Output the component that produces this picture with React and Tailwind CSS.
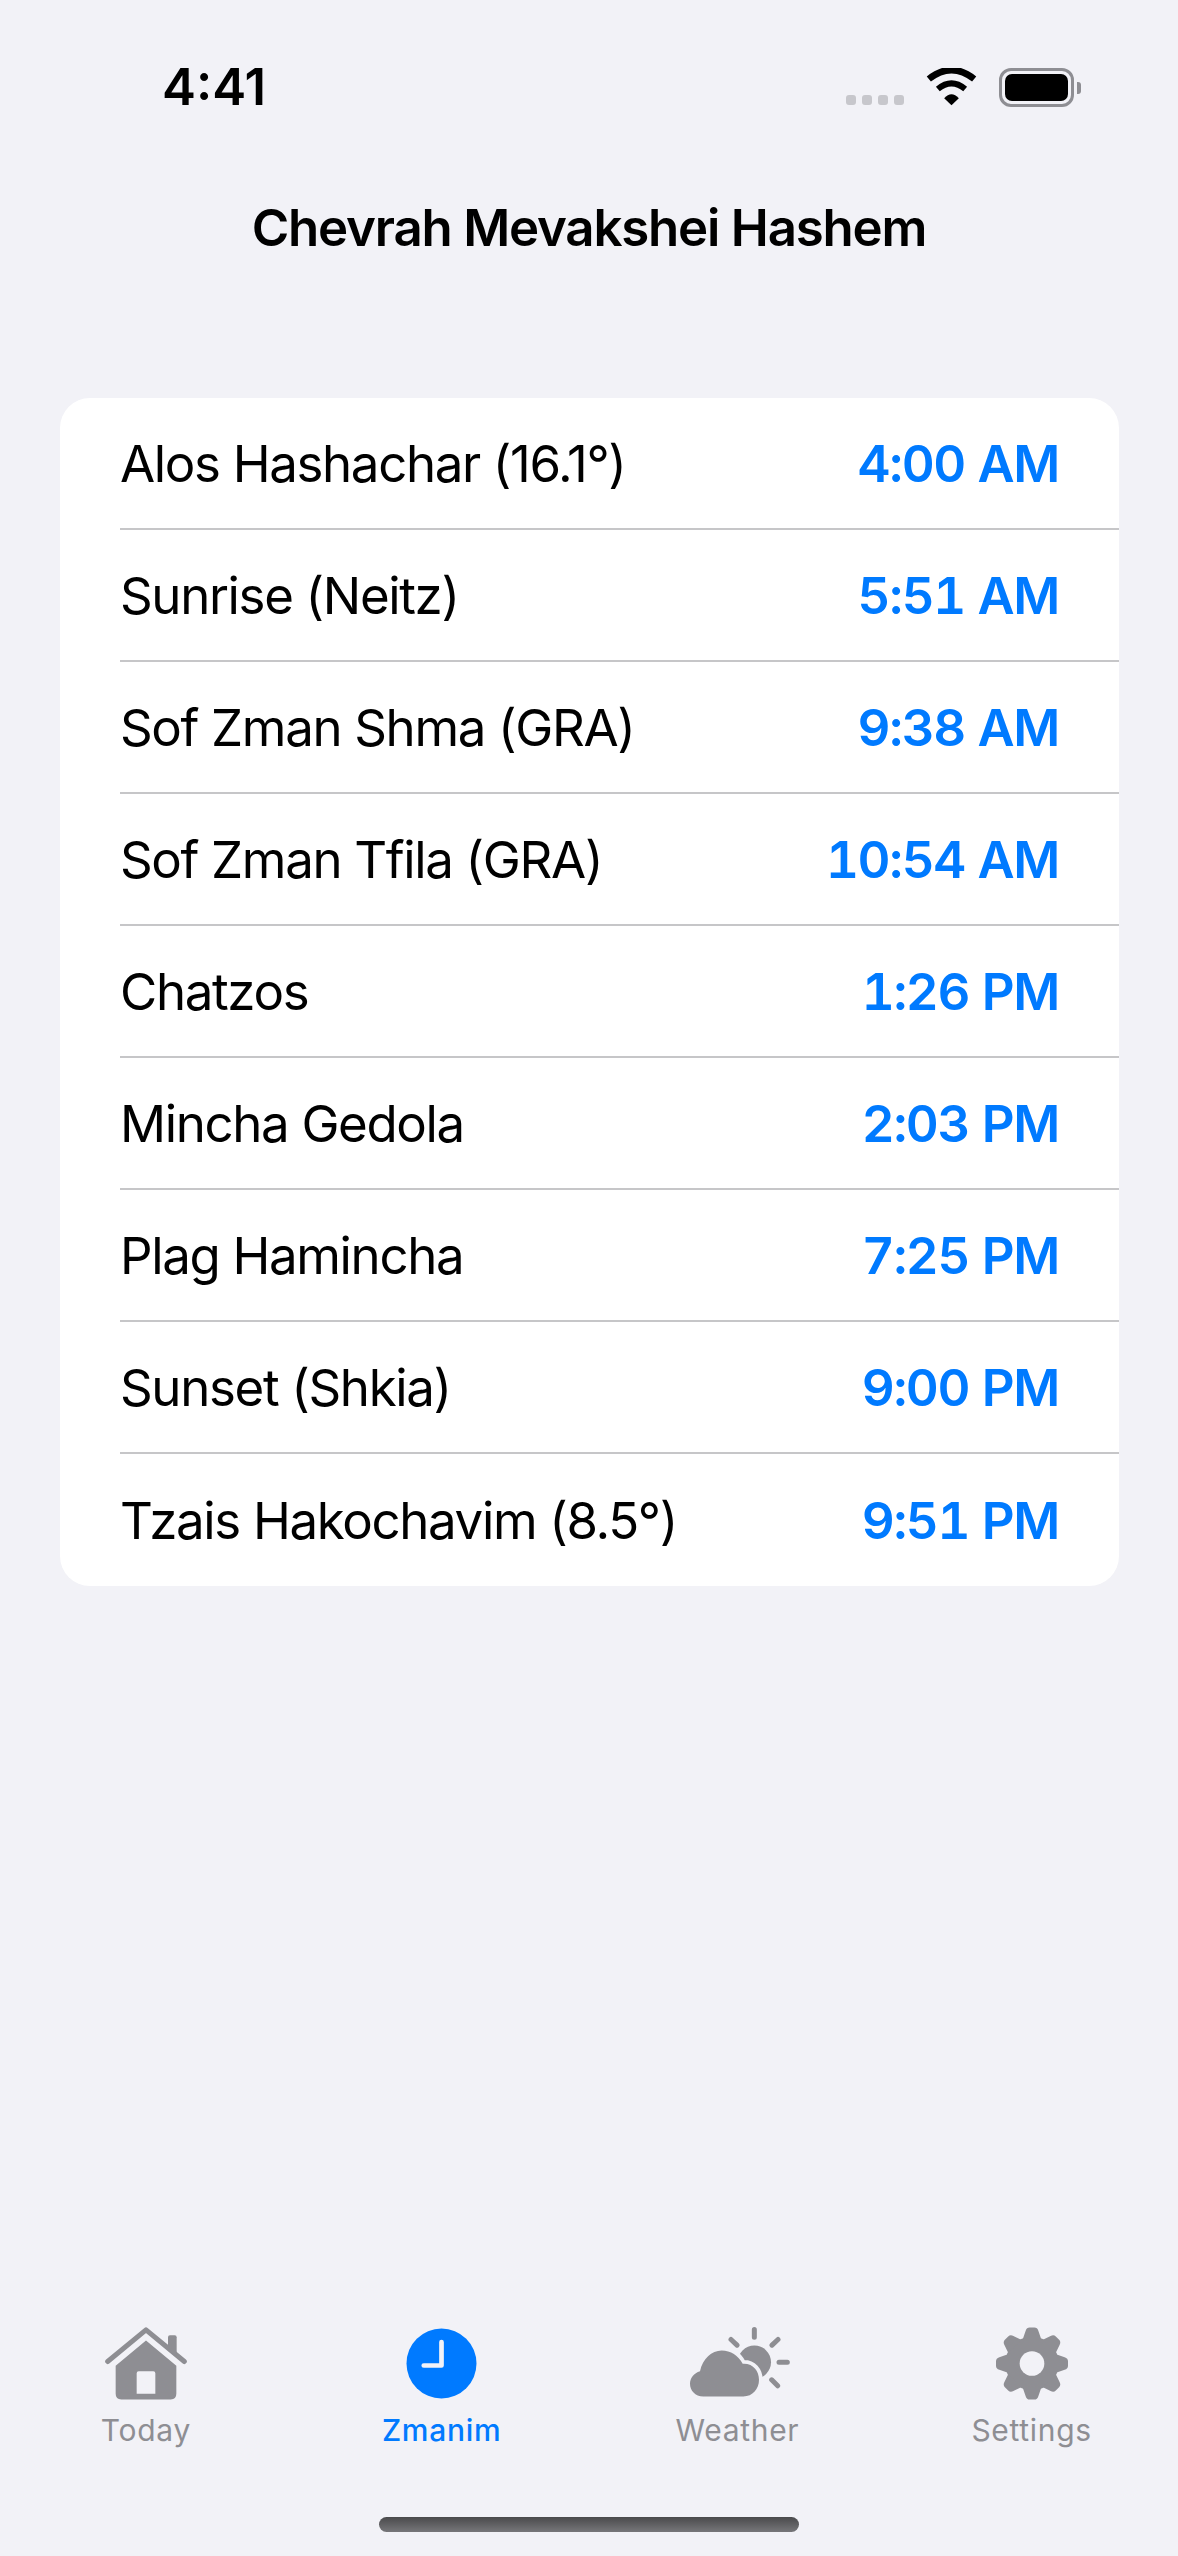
import React from 'react';

const zmanim = [
  ['Alos Hashachar (16.1°)', '4:00 AM'],
  ['Sunrise (Neitz)', '5:51 AM'],
  ['Sof Zman Shma (GRA)', '9:38 AM'],
  ['Sof Zman Tfila (GRA)', '10:54 AM'],
  ['Chatzos', '1:26 PM'],
  ['Mincha Gedola', '2:03 PM'],
  ['Plag Hamincha', '7:25 PM'],
  ['Sunset (Shkia)', '9:00 PM'],
  ['Tzais Hakochavim (8.5°)', '9:51 PM'],
];

function HomeIcon() {
  return (
    <svg width="82" height="73" viewBox="134 80 246 218">
      <path d="M142 183 L257 88 L372 183" fill="none" stroke="#8e8e93" strokeWidth="15" strokeLinecap="round" strokeLinejoin="round" />
      <path d="M323 150 V110 Q323 104 329 104 H343 Q349 104 349 110 V170 Z" fill="#8e8e93" />
      <path fillRule="evenodd" d="M166 196 L257 120 L348 196 V280 Q348 297 331 297 H183 Q166 297 166 280 Z M229 218 Q229 212 235 212 H279 Q285 212 285 218 V280 H229 Z" fill="#8e8e93" />
    </svg>
  );
}

function ClockIcon() {
  return (
    <svg width="73" height="73" viewBox="1040 80 210 218">
      <circle cx="1145" cy="189" r="104.5" fill="#007aff" />
      <path d="M1145 125 V195 H1092" fill="none" stroke="#f2f2f7" strokeWidth="14" strokeLinecap="round" strokeLinejoin="round" />
    </svg>
  );
}

function WeatherIcon() {
  const cloud = 'M190 288 C165 288 150 270 150 250 C150 232 162 218 180 212 C188 175 215 150 245 150 C272 150 295 165 308 190 C340 188 357 212 357 238 C357 266 338 288 310 288 Z';
  return (
    <svg className="ml-[5px]" width="100" height="73" viewBox="150 80 300 218">
      <circle cx="343" cy="185" r="50" fill="#8e8e93" />
      <path d={cloud} fill="#f2f2f7" stroke="#f2f2f7" strokeWidth="22" />
      <path d={cloud} fill="#8e8e93" />
      <path d="M343 87 V110 M273 117 L291 134 M414 117 L396 134 M417 185 H442 M395 238 L413 256" stroke="#8e8e93" strokeWidth="15" strokeLinecap="round" />
    </svg>
  );
}

function GearIcon() {
  return (
    <svg width="72" height="73" viewBox="-108 -109 216 218">
      <circle r="80" fill="#8e8e93" />
      {[0, 45, 90, 135, 180, 225, 270, 315].map((a) => (
        <path
          key={a}
          transform={`rotate(${a})`}
          d="M-28 -72 L-19 -98 Q-16 -108 -7 -108 H7 Q16 -108 19 -98 L28 -72 Z"
          fill="#8e8e93"
        />
      ))}
      <circle r="37" fill="#f2f2f7" />
    </svg>
  );
}

function Tab({ icon, label, active, className = 'w-[296px]' }) {
  return (
    <div className={`${className} flex flex-col items-center`}>
      <div className="h-[73px] flex items-center justify-center">{icon}</div>
      <span className={`mt-[10px] text-[30px] leading-[40px] tracking-[0.7px] ${active ? 'font-medium text-[#007aff]' : 'font-normal text-[#8e8e93]'}`}>
        {label}
      </span>
    </div>
  );
}

function StatusBar() {
  return (
    <div className="h-[176px] pt-[62px] pl-[162px] pr-[97px] flex justify-between items-start">
      <span className="text-[51px] leading-[50px] font-semibold text-black">4:41</span>
      <div className="flex items-end mt-[6px]">
        <div className="flex gap-[6px] mb-[2px]">
          <div className="w-[10px] h-[10px] rounded-[3px] bg-[#c7c7cc]" />
          <div className="w-[10px] h-[10px] rounded-[3px] bg-[#c7c7cc]" />
          <div className="w-[10px] h-[10px] rounded-[3px] bg-[#c7c7cc]" />
          <div className="w-[10px] h-[10px] rounded-[3px] bg-[#c7c7cc]" />
        </div>
        <svg className="ml-[22px] mb-[1px]" width="51" height="38" viewBox="378 57 152 114">
          <path d="M386 90 Q454 36 522 90" fill="none" stroke="#000" strokeWidth="20" />
          <path d="M413 120 Q454 86 495 120" fill="none" stroke="#000" strokeWidth="18" />
          <path d="M432 148 Q454 124 476 148 L454 169 Z" fill="#000" />
        </svg>
        <div className="ml-[22px] w-[75px] h-[39px] rounded-[12px] border-[3px] border-[#8e8e93] p-[3px]">
          <div className="w-full h-full rounded-[7px] bg-black" />
        </div>
        <div className="ml-[3px] mb-[13px] w-[4px] h-[12px] rounded-r-[3px] bg-[#8e8e93]" />
      </div>
    </div>
  );
}

export default function App() {
  return (
    <div className="w-[1178px] h-[2556px] bg-[#f2f2f7] flex flex-col font-['Inter',sans-serif] overflow-hidden">
      <StatusBar />
      <h1 className="h-[100px] pt-[2px] text-center text-[51px] leading-[100px] font-semibold tracking-[-1.2px] text-black">
        Chevrah Mevakshei Hashem
      </h1>
      <div className="mt-[122px] ml-[60px] mr-[59px] bg-white rounded-[30px] overflow-hidden">
        {zmanim.map(([name, time], i) => (
          <div key={name} className={`h-[132px] ml-[60px] pr-[60px] pt-[3px] flex items-center justify-between ${i < zmanim.length - 1 ? 'border-b-2 border-[#c6c6c8]' : ''}`}>
            <span className="text-[51px] tracking-[-1.35px] text-black">{name}</span>
            <span className="text-[51px] font-semibold tabular-nums tracking-[-1.3px] text-[#007aff]">{time}</span>
          </div>
        ))}
      </div>
      <div className="flex-1" />
      <div className="flex -ml-[2px]">
        <Tab icon={<HomeIcon />} label="Today" />
        <Tab icon={<ClockIcon />} label="Zmanim" active />
        <Tab icon={<WeatherIcon />} label="Weather" />
        <Tab icon={<GearIcon />} label="Settings" className="w-[293px]" />
      </div>
      <div className="mt-[67px] mb-[24px] mx-auto w-[420px] h-[15px] rounded-full bg-gradient-to-b from-[#4a4a4c] to-[#77777a]" />
    </div>
  );
}
